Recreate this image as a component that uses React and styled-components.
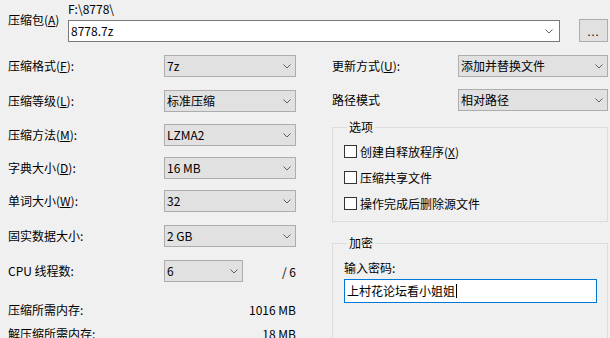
import React from 'react';
import styled, { createGlobalStyle } from 'styled-components';

const Global = createGlobalStyle`
  html, body { margin: 0; padding: 0; background: #f0f0f0; }
  body {
    font-family: "Noto Sans CJK SC", "Liberation Sans", sans-serif;
    font-size: 12px;
    color: #000;
    overflow: hidden;
  }
`;

const Dialog = styled.div`
  width: 610px;
  height: 338px;
  overflow: hidden;
  background: #f0f0f0;
  box-sizing: border-box;
  padding: 1px 2px 0 8px;
`;

const TopBar = styled.div`
  display: flex;
  align-items: flex-start;
`;

const ArchiveLabel = styled.div`
  width: 60px;
  margin-top: 11px;
  line-height: 16px;
  white-space: nowrap;
`;

const PathColumn = styled.div`
  display: flex;
  flex-direction: column;
  width: 492px;
  gap: 3px;
`;

const PathText = styled.div`
  line-height: 16px;
  height: 16px;
`;

const Combo = styled.div`
  height: 22px;
  box-sizing: border-box;
  border: 1px solid #7a7a7a;
  background: #fff;
  display: flex;
  align-items: center;
  padding: 0 6px 0 2px;
  line-height: 20px;
  justify-content: space-between;
`;

const BrowseButton = styled.div`
  margin-left: 19px;
  margin-top: 18px;
  width: 29px;
  height: 23px;
  box-sizing: border-box;
  border: 1px solid #adadad;
  background: #e1e1e1;
  display: flex;
  align-items: flex-end;
  justify-content: center;
  padding-bottom: 4px;
  font-size: 11px;
  line-height: 12px;
  letter-spacing: 1px;
`;

const Body = styled.div`
  display: flex;
  margin-top: 13px;
`;

const LeftColumn = styled.div`
  width: 288px;
  display: flex;
  flex-direction: column;
`;

const RightColumn = styled.div`
  width: 276px;
  margin-left: 36px;
  display: flex;
  flex-direction: column;
`;

const FieldRow = styled.div`
  display: flex;
  align-items: center;
  height: 22px;
  margin-top: ${p => p.$mt || 0}px;
`;

const Label = styled.div`
  width: ${p => p.$w}px;
  flex: none;
  white-space: nowrap;
  line-height: 22px;
`;

const SelectBox = styled.div`
  width: ${p => p.$w}px;
  height: 22px;
  box-sizing: border-box;
  border: 1px solid #adadad;
  background: #e1e1e1;
  display: flex;
  align-items: center;
  justify-content: space-between;
  padding: 0 4px 0 2px;
  line-height: 20px;
  white-space: nowrap;
`;

const Trail = styled.div`
  flex: 1;
  text-align: right;
`;

const InfoRow = styled.div`
  display: flex;
  justify-content: space-between;
  line-height: 24px;
  margin-top: ${p => p.$mt || 0}px;
`;

const U = styled.span`
  text-decoration: underline;
  text-underline-offset: 1px;
`;

const Group = styled.fieldset`
  margin: ${p => p.$mt}px 0 0 0;
  padding: ${p => p.$pt}px 11px ${p => p.$pb}px 11px;
  border: 1px solid #dcdcdc;
  min-width: 0;
  height: ${p => (p.$h ? `${p.$h}px` : 'auto')};
  box-sizing: border-box;
`;

const Legend = styled.legend`
  padding: 0 2px;
  margin-left: 3px;
  line-height: 16px;
`;

const CheckRow = styled.label`
  display: flex;
  align-items: center;
  height: 26px;
  gap: 3px;
`;

const CheckBox = styled.span`
  width: 13px;
  height: 13px;
  box-sizing: border-box;
  border: 1px solid #333;
  background: #fff;
  flex: none;
`;

const PwLabel = styled.div`
  line-height: 20px;
`;

const PwInput = styled.div`
  margin-top: 1px;
  width: 253px;
  height: 24px;
  box-sizing: border-box;
  border: 1px solid #0078d7;
  background: #fff;
  padding: 0 2px;
  line-height: 22px;
  display: flex;
  align-items: center;
`;

const Caret = styled.span`
  display: inline-block;
  width: 1px;
  height: 14px;
  background: #000;
  margin-left: 1px;
`;

const Chevron = () => (
  <svg width="8" height="5" viewBox="0 0 8 5">
    <polyline points="0.5,0.5 4,4 7.5,0.5" fill="none" stroke="#606060" strokeWidth="1" />
  </svg>
);

const Select = ({ w, children }) => (
  <SelectBox $w={w}>
    <span>{children}</span>
    <Chevron />
  </SelectBox>
);

const leftRows = [
  { label: <>压缩格式(<U>F</U>):</>, value: '7z', mt: 0 },
  { label: <>压缩等级(<U>L</U>):</>, value: '标准压缩', mt: 13 },
  { label: <>压缩方法(<U>M</U>):</>, value: 'LZMA2', mt: 12 },
  { label: <>字典大小(<U>D</U>):</>, value: '16 MB', mt: 11 },
  { label: <>单词大小(<U>W</U>):</>, value: '32', mt: 11 },
  { label: <>固实数据大小:</>, value: '2 GB', mt: 13 },
];

export default function App() {
  return (
    <>
      <Global />
      <Dialog>
        <TopBar>
          <ArchiveLabel>压缩包(<U>A</U>)</ArchiveLabel>
          <PathColumn>
            <PathText>F:\8778\</PathText>
            <Combo>
              <span>8778.7z</span>
              <Chevron />
            </Combo>
          </PathColumn>
          <BrowseButton>...</BrowseButton>
        </TopBar>
        <Body>
          <LeftColumn>
            {leftRows.map((r, i) => (
              <FieldRow key={i} $mt={r.mt}>
                <Label $w={156}>{r.label}</Label>
                <Select w={132}>{r.value}</Select>
              </FieldRow>
            ))}
            <FieldRow $mt={13}>
              <Label $w={156}>CPU 线程数:</Label>
              <Select w={79}>6</Select>
              <Trail>/ 6</Trail>
            </FieldRow>
            <InfoRow $mt={16}>
              <span>压缩所需内存:</span>
              <span>1016 MB</span>
            </InfoRow>
            <InfoRow>
              <span>解压缩所需内存:</span>
              <span>18 MB</span>
            </InfoRow>
          </LeftColumn>
          <RightColumn>
            <FieldRow>
              <Label $w={126}>更新方式(<U>U</U>):</Label>
              <Select w={150}>添加并替换文件</Select>
            </FieldRow>
            <FieldRow $mt={12}>
              <Label $w={126}>路径模式</Label>
              <Select w={150}>相对路径</Select>
            </FieldRow>
            <Group $mt={8} $pt={3} $pb={5}>
              <Legend>选项</Legend>
              <CheckRow>
                <CheckBox />
                <span>创建自释放程序(<U>X</U>)</span>
              </CheckRow>
              <CheckRow>
                <CheckBox />
                <span>压缩共享文件</span>
              </CheckRow>
              <CheckRow>
                <CheckBox />
                <span>操作完成后删除源文件</span>
              </CheckRow>
            </Group>
            <Group $mt={13} $pt={7} $pb={0} $h={140}>
              <Legend>加密</Legend>
              <PwLabel>输入密码:</PwLabel>
              <PwInput>
                上村花论坛看小姐姐<Caret />
              </PwInput>
            </Group>
          </RightColumn>
        </Body>
      </Dialog>
    </>
  );
}
